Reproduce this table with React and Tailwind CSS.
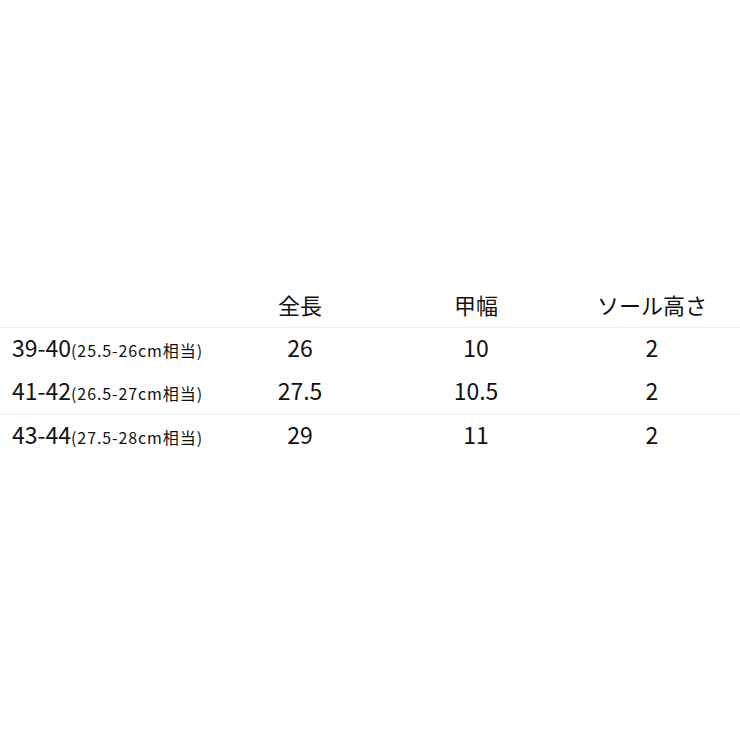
export default function App() {
  const rows = [
    { size: "39-40", note: "(25.5-26cm相当)", length: "26", width: "10", sole: "2", border: false },
    { size: "41-42", note: "(26.5-27cm相当)", length: "27.5", width: "10.5", sole: "2", border: false },
    { size: "43-44", note: "(27.5-28cm相当)", length: "29", width: "11", sole: "2", border: true },
  ];
  const font = { fontFamily: '"Noto Sans CJK JP", "Noto Sans", sans-serif' };
  return (
    <div className="w-[740px] h-[740px] bg-white flex flex-col justify-center text-[#111]" style={font}>
      <div className="grid grid-cols-[212px_176px_176px_176px] h-[45px] items-center text-[22px] leading-none pb-[2px] border-b border-[#eeeeee]">
        <div></div>
        <div className="text-center">全長</div>
        <div className="text-center">甲幅</div>
        <div className="text-center">ソール高さ</div>
      </div>
      {rows.map((r, i) => (
        <div
          key={i}
          className={
            r.border
              ? "grid grid-cols-[212px_176px_176px_176px] h-[43px] items-center text-[23px] leading-none pb-[4px] border-t border-[#eeeeee]"
              : "grid grid-cols-[212px_176px_176px_176px] h-[43px] items-center text-[23px] leading-none pb-[4px]"
          }
        >
          <div className="pl-[12px] whitespace-nowrap">
            {r.size}
            <span className="text-[16px] tracking-[0.9px]">{r.note}</span>
          </div>
          <div className="text-center">{r.length}</div>
          <div className="text-center">{r.width}</div>
          <div className="text-center">{r.sole}</div>
        </div>
      ))}
    </div>
  );
}
